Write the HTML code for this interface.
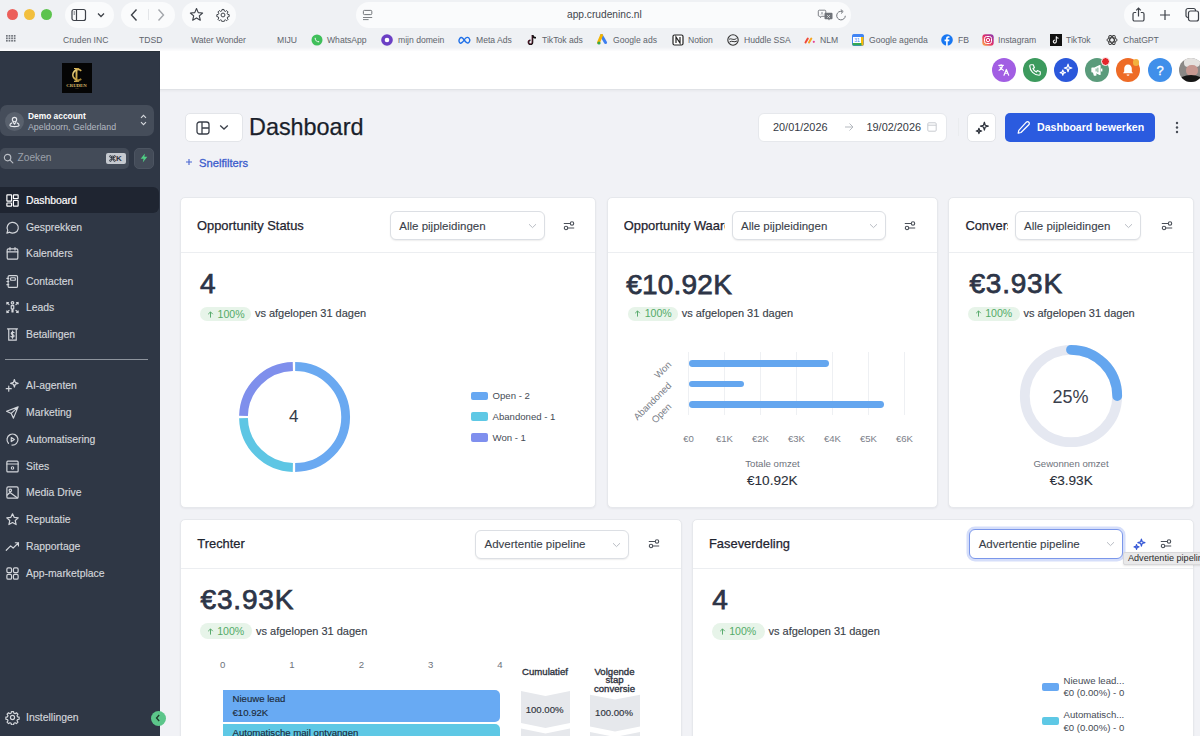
<!DOCTYPE html>
<html><head><meta charset="utf-8">
<style>
*{box-sizing:border-box;margin:0;padding:0}
html,body{width:1200px;height:736px;overflow:hidden}
body{position:relative;background:#eff1f4;font-family:"Liberation Sans",sans-serif;color:#1f2430}
.a{position:absolute}
.nw{white-space:nowrap}
svg{display:block}
/* chrome */
.pill{position:absolute;top:2px;height:26px;border-radius:13px;background:#fafbfc}
.tl{position:absolute;top:9px;width:11px;height:11px;border-radius:50%}
.bm{position:absolute;top:34px;font-size:8.6px;color:#60646c;white-space:nowrap;line-height:12px}
.bi{position:absolute;top:34px;width:12px;height:12px}
/* sidebar */
#side{position:absolute;left:0;top:51px;width:160px;height:685px;background:#2f3745;box-shadow:inset 0 1px 0 #283039}
.nav{position:absolute;margin-top:1px;left:26px;font-size:10.4px;color:#d3d6db;white-space:nowrap;line-height:12px;-webkit-text-stroke:0.15px #d3d6db}
.nico{position:absolute;left:4.5px;width:15px;height:15px}
/* header */
#hdr{position:absolute;left:160px;top:51px;width:1040px;height:39px;background:#fff;border-bottom:1px solid #e0e2e6;box-shadow:0 1px 2px rgba(0,0,0,.04)}
.hc{position:absolute;top:58px;width:24px;height:24px;border-radius:50%}
/* main */
#main{position:absolute;left:160px;top:90px;width:1040px;height:646px;background:#f1f2f6}
.card{position:absolute;background:#fff;border:1px solid #e5e7eb;border-radius:6px;overflow:hidden}
.ch{position:absolute;left:0;right:0;top:0;border-bottom:1px solid #eceef1}
.ttl{position:absolute;font-size:12.9px;color:#1f2430;white-space:nowrap;line-height:14px;-webkit-text-stroke:0.25px #1f2430}
.dd{position:absolute;height:30px;border:1px solid #dcdfe4;border-radius:6px;background:#fff;box-shadow:0 1px 1px rgba(0,0,0,.06)}
.ddt{position:absolute;left:9px;top:8px;font-size:11.4px;color:#3a3f4a;white-space:nowrap;line-height:13px}
.big{position:absolute;font-size:28px;font-weight:700;color:#2d3547;white-space:nowrap;line-height:28px}
.badge{position:absolute;height:14px;border-radius:7px;background:#e7f5e9;color:#55b066;font-size:10.8px;line-height:14px;white-space:nowrap}
.vs{position:absolute;font-size:11px;color:#3a3f4a;white-space:nowrap;line-height:13px;-webkit-text-stroke:0.15px #3a3f4a}
</style></head><body>

<!-- ===== Browser chrome ===== -->
<div class="tl" style="left:7px;background:#ec5f5a"></div>
<div class="tl" style="left:24px;background:#f2bf3d"></div>
<div class="tl" style="left:41px;background:#5cc34d"></div>

<div class="pill" style="left:65px;width:49px"></div>
<div class="pill" style="left:121px;width:54px"></div>
<div class="pill" style="left:182px;width:54px"></div>
<div class="pill" style="left:356px;width:495px"></div>
<div class="pill" style="left:1124px;width:90px"></div>

<div class="a nw" style="left:567px;top:8px;font-size:10.2px;color:#42464d;line-height:13px">app.crudeninc.nl</div>


<!-- toolbar icons -->
<svg class="a" style="left:71px;top:8px" width="16" height="14" viewBox="0 0 16 14"><rect x="1" y="1.5" width="13.5" height="11" rx="2" fill="none" stroke="#3d4148" stroke-width="1.2"/><line x1="5.5" y1="1.5" x2="5.5" y2="12.5" stroke="#3d4148" stroke-width="1.2"/><line x1="2.6" y1="4" x2="4" y2="4" stroke="#3d4148" stroke-width="0.9"/><line x1="2.6" y1="6" x2="4" y2="6" stroke="#3d4148" stroke-width="0.9"/></svg>
<svg class="a" style="left:97px;top:12px" width="8" height="6" viewBox="0 0 8 6"><path d="M1 1.5 L4 4.5 L7 1.5" fill="none" stroke="#3d4148" stroke-width="1.3"/></svg>
<svg class="a" style="left:130px;top:8px" width="8" height="14" viewBox="0 0 8 14"><path d="M6.5 1.5 L1.5 7 L6.5 12.5" fill="none" stroke="#3d4148" stroke-width="1.4"/></svg>
<div class="a" style="left:148px;top:9px;width:1px;height:11px;background:#e3e5e8"></div>
<svg class="a" style="left:157px;top:8px" width="8" height="14" viewBox="0 0 8 14"><path d="M1.5 1.5 L6.5 7 L1.5 12.5" fill="none" stroke="#a3a6ab" stroke-width="1.4"/></svg>
<svg class="a" style="left:189px;top:7px" width="15" height="15" viewBox="0 0 24 24"><path d="M12 2.5 L14.8 9 L21.8 9.6 L16.5 14.2 L18.1 21.2 L12 17.5 L5.9 21.2 L7.5 14.2 L2.2 9.6 L9.2 9 Z" fill="none" stroke="#3d4148" stroke-width="1.8" stroke-linejoin="round"/></svg>
<svg class="a" style="left:215.5px;top:7.5px" width="14" height="14" viewBox="0 0 24 24"><path d="M10.3 2.5h3.4l.5 2.6 1.9.8 2.2-1.5 2.4 2.4-1.5 2.2.8 1.9 2.6.5v3.4l-2.6.5-.8 1.9 1.5 2.2-2.4 2.4-2.2-1.5-1.9.8-.5 2.6h-3.4l-.5-2.6-1.9-.8-2.2 1.5-2.4-2.4 1.5-2.2-.8-1.9-2.6-.5v-3.4l2.6-.5.8-1.9-1.5-2.2 2.4-2.4 2.2 1.5 1.9-.8z" fill="none" stroke="#3d4148" stroke-width="1.7" stroke-linejoin="round"/><circle cx="12" cy="12" r="3.3" fill="none" stroke="#3d4148" stroke-width="1.7"/></svg>
<svg class="a" style="left:362px;top:9px" width="11" height="12" viewBox="0 0 11 12"><rect x="1.4" y="1.4" width="8.4" height="4.2" rx="1" fill="none" stroke="#707478" stroke-width="1"/><path d="M1 8.5 H10.2 M1 10.6 H6.6" stroke="#707478" stroke-width="0.9"/></svg>
<svg class="a" style="left:817px;top:9px" width="17" height="12" viewBox="0 0 17 12"><path d="M2.3 1.2 H7.8 A1 1 0 0 1 8.8 2.2 V6.3 A1 1 0 0 1 7.8 7.3 H4.5 L3.5 8.6 L3.2 7.3 H2.3 A1 1 0 0 1 1.3 6.3 V2.2 A1 1 0 0 1 2.3 1.2 Z" fill="none" stroke="#6f7379" stroke-width="0.9"/><path d="M4 5.8 L5 3 L6 5.8" fill="none" stroke="#8a8e94" stroke-width="0.6"/><path d="M8.5 3.8 H14.5 A1 1 0 0 1 15.5 4.8 V9.3 A1 1 0 0 1 14.5 10.3 H12.8 L12 11.6 L11.2 10.3 H8.5 A1 1 0 0 1 7.5 9.3 V4.8 A1 1 0 0 1 8.5 3.8 Z" fill="#6f7379"/><path d="M10 6 L13 9 M13 6 L10.2 8.8" stroke="#e8e9eb" stroke-width="0.7"/></svg>
<svg class="a" style="left:836px;top:9px" width="11" height="12" viewBox="0 0 11 12"><path d="M9.3 6.8 A4.3 4.3 0 1 1 6 2.4" fill="none" stroke="#6f7379" stroke-width="1"/><path d="M4.8 0.6 L7.2 2.5 L5 4.5" fill="none" stroke="#6f7379" stroke-width="1"/></svg>
<svg class="a" style="left:1132px;top:7px" width="13" height="15" viewBox="0 0 13 15"><path d="M4.2 5.5 H2.5 A1.5 1.5 0 0 0 1 7 V12.5 A1.5 1.5 0 0 0 2.5 14 H10.5 A1.5 1.5 0 0 0 12 12.5 V7 A1.5 1.5 0 0 0 10.5 5.5 H8.8" fill="none" stroke="#3d4148" stroke-width="1.2"/><path d="M6.5 9.5 V1.2 M4.2 3.3 L6.5 1 L8.8 3.3" fill="none" stroke="#3d4148" stroke-width="1.2"/></svg>
<svg class="a" style="left:1159px;top:9px" width="12" height="12" viewBox="0 0 12 12"><path d="M6 1 V11 M1 6 H11" stroke="#3d4148" stroke-width="1.2"/></svg>
<svg class="a" style="left:1185px;top:7px" width="15" height="15" viewBox="0 0 15 15"><rect x="1" y="1.5" width="9.5" height="9" rx="2" fill="none" stroke="#3d4148" stroke-width="1.2"/><rect x="3.5" y="4" width="10" height="10" rx="2" fill="#fafbfc" stroke="#3d4148" stroke-width="1.2"/></svg>

<!-- bookmarks -->
<svg class="a" style="left:5.8px;top:35px" width="10" height="7" viewBox="0 0 10 7"><g fill="#6f737a"><rect x="0.0" y="0.00" width="1.7" height="1.7"/><rect x="2.6" y="0.00" width="1.7" height="1.7"/><rect x="5.2" y="0.00" width="1.7" height="1.7"/><rect x="7.8" y="0.00" width="1.7" height="1.7"/><rect x="0.0" y="2.45" width="1.7" height="1.7"/><rect x="2.6" y="2.45" width="1.7" height="1.7"/><rect x="5.2" y="2.45" width="1.7" height="1.7"/><rect x="7.8" y="2.45" width="1.7" height="1.7"/><rect x="0.0" y="4.90" width="1.7" height="1.7"/><rect x="2.6" y="4.90" width="1.7" height="1.7"/><rect x="5.2" y="4.90" width="1.7" height="1.7"/><rect x="7.8" y="4.90" width="1.7" height="1.7"/></g></svg>
<div class="bm" style="left:63px">Cruden INC</div>
<div class="bm" style="left:139px">TDSD</div>
<div class="bm" style="left:191px">Water Wonder</div>
<div class="bm" style="left:277px">MIJU</div>
<svg class="bi" style="left:311px" viewBox="0 0 12 12"><circle cx="6" cy="6" r="5.5" fill="#3fbf5a"/><path d="M4 3.5 C3.5 4 3.6 5.5 5 7 C6.5 8.5 7.8 8.6 8.4 8 L7.6 7.1 L6.8 7.5 C6.2 7.2 4.8 5.8 4.5 5.2 L4.9 4.4 Z" fill="#fff"/></svg>
<div class="bm" style="left:327px">WhatsApp</div>
<svg class="bi" style="left:381px" viewBox="0 0 12 12"><circle cx="6" cy="6" r="5.8" fill="#6b3fc4"/><circle cx="6" cy="6" r="2.3" fill="#fff"/></svg>
<div class="bm" style="left:398px">mijn domein</div>
<svg class="bi" style="left:458px;top:36px;width:13px;height:8px" viewBox="0 0 13 8"><path d="M1.5 6.5 C0 4 2.5 0 4.5 2 C6 3.5 7 5.5 8.5 6.5 C10.5 8 12.5 5 11.5 3 C10.5 0.5 8 1 6.5 3.5 C5 6 2.5 8.5 1.5 6.5 Z" fill="none" stroke="#1e6fe8" stroke-width="1.4"/></svg>
<div class="bm" style="left:476px">Meta Ads</div>
<svg class="bi" style="left:526px" viewBox="0 0 12 12"><path d="M6.5 1 V8.2 A2 2 0 1 1 4.5 6.2" fill="none" stroke="#111" stroke-width="1.6"/><path d="M6.5 1.2 C7 3 8.5 3.8 10 3.8" fill="none" stroke="#111" stroke-width="1.6"/><path d="M6 1.5 V8 A2 2 0 1 1 4 6" fill="none" stroke="#e0245e" stroke-width="0.5" opacity="0.6"/></svg>
<div class="bm" style="left:542px">TikTok ads</div>
<svg class="bi" style="left:597px" viewBox="0 0 12 12"><path d="M4.5 1.5 L8.5 8.5" stroke="#3d7ef0" stroke-width="3" stroke-linecap="round"/><path d="M4.5 1.5 L1.5 8.5" stroke="#f4b400" stroke-width="3" stroke-linecap="round"/><circle cx="2" cy="9" r="1.6" fill="#34a853"/><path d="M7.5 1.5 L10.5 8.5" stroke="#4285f4" stroke-width="0" /></svg>
<div class="bm" style="left:613px">Google ads</div>
<svg class="bi" style="left:672px" viewBox="0 0 12 12"><rect x="1" y="1" width="10" height="10" rx="1.5" fill="#fff" stroke="#222" stroke-width="1.2"/><path d="M4 9 V3 L8 9 V3" fill="none" stroke="#222" stroke-width="1.2"/></svg>
<div class="bm" style="left:688px">Notion</div>
<svg class="bi" style="left:727px" viewBox="0 0 12 12"><circle cx="6" cy="6" r="5.2" fill="none" stroke="#333" stroke-width="1.1"/><path d="M2 5.5 C4 3.5 6 7 9.5 4.5 M2.5 8 C5 6 7 9 10 7" fill="none" stroke="#333" stroke-width="1"/></svg>
<div class="bm" style="left:744px">Huddle SSA</div>
<svg class="bi" style="left:804px" viewBox="0 0 12 12"><path d="M1.5 8.5 L3.8 4.5" stroke="#f04b3a" stroke-width="2" stroke-linecap="round"/><path d="M5 8.5 L7.3 4.5" stroke="#f5a623" stroke-width="2" stroke-linecap="round"/><circle cx="9.8" cy="7.8" r="1.1" fill="#e84393"/></svg>
<div class="bm" style="left:820px">NLM</div>
<svg class="bi" style="left:852px" viewBox="0 0 12 12"><rect x="0.5" y="0.5" width="11" height="11" rx="1.5" fill="#fff" stroke="#4285f4" stroke-width="1"/><rect x="0.5" y="0.5" width="11" height="2.5" fill="#4285f4"/><rect x="9" y="3" width="2.5" height="8.5" fill="#fbbc04"/><rect x="0.5" y="9" width="9" height="2.5" fill="#34a853"/><text x="5" y="8.3" font-size="5" font-family="Liberation Sans" fill="#4285f4" text-anchor="middle">31</text></svg>
<div class="bm" style="left:869px">Google agenda</div>
<svg class="bi" style="left:941px" viewBox="0 0 12 12"><circle cx="6" cy="6" r="5.8" fill="#1877f2"/><path d="M6.7 12 V7.2 H8.2 L8.4 5.6 H6.7 V4.6 C6.7 4.1 6.9 3.8 7.5 3.8 H8.5 V2.4 C8.1 2.3 7.6 2.3 7.1 2.3 C5.9 2.3 5.1 3 5.1 4.4 V5.6 H3.6 V7.2 H5.1 V12 Z" fill="#fff"/></svg>
<div class="bm" style="left:958px">FB</div>
<svg class="bi" style="left:982px" viewBox="0 0 12 12"><defs><linearGradient id="ig" x1="0" y1="1" x2="1" y2="0"><stop offset="0" stop-color="#fdb347"/><stop offset=".5" stop-color="#e1306c"/><stop offset="1" stop-color="#833ab4"/></linearGradient></defs><rect x="0.3" y="0.3" width="11.4" height="11.4" rx="3" fill="url(#ig)"/><rect x="2.5" y="2.5" width="7" height="7" rx="2" fill="none" stroke="#fff" stroke-width="1"/><circle cx="6" cy="6" r="1.7" fill="none" stroke="#fff" stroke-width="1"/></svg>
<div class="bm" style="left:998px">Instagram</div>
<svg class="bi" style="left:1050px" viewBox="0 0 12 12"><rect x="0" y="0" width="12" height="12" fill="#111"/><path d="M6.3 2.5 V7.6 A1.5 1.5 0 1 1 4.8 6.1" fill="none" stroke="#fff" stroke-width="1.1"/><path d="M6.3 2.6 C6.7 3.6 7.6 4.2 8.6 4.2" fill="none" stroke="#fff" stroke-width="1.1"/></svg>
<div class="bm" style="left:1066px">TikTok</div>
<svg class="bi" style="left:1106px" viewBox="0 0 12 12"><g fill="none" stroke="#333" stroke-width="0.9"><ellipse cx="6" cy="6" rx="5" ry="2.2"/><ellipse cx="6" cy="6" rx="5" ry="2.2" transform="rotate(60 6 6)"/><ellipse cx="6" cy="6" rx="5" ry="2.2" transform="rotate(120 6 6)"/></g></svg>
<div class="bm" style="left:1123px">ChatGPT</div>


<!-- ===== Sidebar ===== -->
<div class="a" style="left:0;top:47px;width:1200px;height:4px;background:linear-gradient(rgba(255,255,255,0),rgba(255,255,255,.85))"></div>
<div id="side">
<div class="a" style="left:62px;top:12px;width:30px;height:30px;background:#050505">
 <svg class="a" style="left:0;top:0" width="30" height="30" viewBox="0 0 30 30"><defs><linearGradient id="gold" x1="0" y1="0" x2="1" y2="1"><stop offset="0" stop-color="#f0d98a"/><stop offset=".6" stop-color="#c9a445"/><stop offset="1" stop-color="#9a7a2c"/></linearGradient></defs>
 <path d="M19.3 7.8 A5.2 5.2 0 1 0 19.3 16" fill="none" stroke="url(#gold)" stroke-width="1.7"/>
 <rect x="13.6" y="5.2" width="1.9" height="13.4" fill="url(#gold)"/><rect x="12" y="5" width="5.2" height="1.1" fill="url(#gold)"/><rect x="12" y="17.8" width="5.2" height="1.1" fill="url(#gold)"/>
 <text x="4.2" y="23.9" textLength="20.6" lengthAdjust="spacingAndGlyphs" font-family="Liberation Serif" font-size="4.6" font-weight="700" fill="#d8bd6a">CRUDEN</text>
 <text x="15" y="26.3" font-family="Liberation Serif" font-size="2" fill="#b89a50" text-anchor="middle">INC</text></svg>
</div>
<div class="a" style="left:0;top:54px;width:154px;height:31px;border-radius:7px;background:#454d5a"></div>
<div class="a" style="left:4.5px;top:60.5px;width:19px;height:19px;border-radius:50%;background:#59616d"></div>
<svg class="a" style="left:7.5px;top:63.5px" width="13" height="13" viewBox="0 0 24 24" fill="none" stroke="#e8eaee" stroke-width="2.1" stroke-linejoin="round"><circle cx="12" cy="8.5" r="4"/><path d="M7.5 14.5 C4.5 15.5 3.5 17.5 3.5 19 C3.5 20.5 7 21.5 12 21.5 C17 21.5 20.5 20.5 20.5 19 C20.5 17.5 19.5 15.5 16.5 14.5"/><path d="M8.5 12 L12 17 L15.5 12"/></svg>
<div class="a nw" style="left:28px;top:59.5px;font-size:8.4px;font-weight:700;color:#fff;line-height:10px">Demo account</div>
<div class="a nw" style="left:28px;top:71px;font-size:8.8px;color:#b4b9c1;line-height:10px">Apeldoorn, Gelderland</div>
<svg class="a" style="left:140px;top:63px" width="7" height="12" viewBox="0 0 7 12"><path d="M1 3.8 L3.5 1.3 L6 3.8 M1 8.2 L3.5 10.7 L6 8.2" fill="none" stroke="#d6d9de" stroke-width="1.1"/></svg>
<div class="a" style="left:0;top:96.5px;width:129px;height:21px;border-radius:5px;background:#434b58"></div>
<svg class="a" style="left:3px;top:101.5px" width="11" height="11" viewBox="0 0 24 24" fill="none" stroke="#b9bdc4" stroke-width="2.6" stroke-linecap="round"><circle cx="10" cy="10" r="7"/><path d="M15.5 15.5 L21.5 21.5"/></svg>
<div class="a nw" style="left:17.5px;top:101px;font-size:10.2px;color:#9ba1aa;line-height:12px">Zoeken</div>
<div class="a" style="left:106px;top:101.5px;width:19.5px;height:11.5px;border-radius:2px;background:#c5c9cf"></div>
<svg class="a" style="left:108.5px;top:104px" width="7" height="7" viewBox="0 0 24 24" fill="none" stroke="#2b313c" stroke-width="3"><path d="M8 8 V16 M16 8 V16 M8 8 H16 M8 16 H16 M8 8 A4 4 0 1 1 8 8.01 M8 8 H5 A3 3 0 1 1 8 5 Z M16 8 V5 A3 3 0 1 1 19 8 Z M16 16 H19 A3 3 0 1 1 16 19 Z M8 16 V19 A3 3 0 1 1 5 16 Z"/></svg><div class="a nw" style="left:116px;top:102.5px;font-size:8px;font-weight:700;color:#2b313c;line-height:10px">K</div>
<div class="a" style="left:133.5px;top:96.5px;width:20.5px;height:21px;border-radius:5px;background:#434b58;border:1px solid #4c5461"></div>
<svg class="a" style="left:139px;top:102px" width="10" height="10" viewBox="0 0 24 24"><path d="M14 1 L4 14 H11 L9 23 L20 9 H13 Z" fill="#4fcf84"/></svg>
<div class="a" style="left:0;top:135.5px;width:159px;height:26.5px;border-radius:0 6px 6px 0;background:#1f2531"></div>
<svg class="nico" style="top:141.5px" viewBox="0 0 24 24" fill="none" stroke="#ffffff" stroke-width="1.9" stroke-linecap="round" stroke-linejoin="round"><rect x="3" y="3" width="7.5" height="10" rx="0.6"/><rect x="13.5" y="3" width="7.5" height="6" rx="0.6"/><rect x="3" y="16" width="7.5" height="5" rx="0.6"/><rect x="13.5" y="12" width="7.5" height="9" rx="0.6"/></svg><div class="nav" style="top:142.5px;color:#ffffff;-webkit-text-stroke:0.2px #fff;">Dashboard</div>
<svg class="nico" style="top:168.5px" viewBox="0 0 24 24" fill="none" stroke="#d3d6db" stroke-width="1.9" stroke-linecap="round" stroke-linejoin="round"><path d="M7.5 19.5 A9 8.5 0 1 0 4.5 16.5 L3 21 Z"/></svg><div class="nav" style="top:169.5px;color:#d3d6db;">Gesprekken</div>
<svg class="nico" style="top:195.4px" viewBox="0 0 24 24" fill="none" stroke="#d3d6db" stroke-width="1.9" stroke-linecap="round" stroke-linejoin="round"><rect x="3.5" y="4.5" width="17" height="16.5" rx="2"/><path d="M3.5 9.5 H20.5 M8 2.5 V6.5 M16 2.5 V6.5"/></svg><div class="nav" style="top:196.4px;color:#d3d6db;">Kalenders</div>
<svg class="nico" style="top:222.5px" viewBox="0 0 24 24" fill="none" stroke="#d3d6db" stroke-width="1.9" stroke-linecap="round" stroke-linejoin="round"><rect x="5" y="2.5" width="15" height="19" rx="2"/><rect x="9" y="6" width="7.5" height="4" rx="1"/><path d="M3 7 H6 M3 12 H6 M3 17 H6"/></svg><div class="nav" style="top:223.5px;color:#d3d6db;">Contacten</div>
<svg class="nico" style="top:249px" viewBox="0 0 24 24" fill="none" stroke="#d3d6db" stroke-width="1.9" stroke-linecap="round" stroke-linejoin="round"><circle cx="12" cy="4.5" r="2"/><path d="M10 9 H14 V14 H12.8 V19 H11.2 V14 H10 Z"/><path d="M3 4 L6.5 7.5 M3 4 H5.5 M3 4 V6.5 M21 4 L17.5 7.5 M21 4 H18.5 M21 4 V6.5 M3 20 L6.5 16.5 M3 20 H5.5 M3 20 V17.5 M21 20 L17.5 16.5 M21 20 H18.5 M21 20 V17.5"/></svg><div class="nav" style="top:250px;color:#d3d6db;">Leads</div>
<svg class="nico" style="top:275.6px" viewBox="0 0 24 24" fill="none" stroke="#d3d6db" stroke-width="1.9" stroke-linecap="round" stroke-linejoin="round"><path d="M4 3 H20 M6 3 V21 H18 V3"/><path d="M14.5 9 C13.5 8 10 8 10 10.3 C10 12.5 14.5 11.8 14.5 14.2 C14.5 16.3 11 16.3 9.5 15.2 M12 6.5 V18"/></svg><div class="nav" style="top:276.6px;color:#d3d6db;">Betalingen</div>
<svg class="nico" style="top:327px" viewBox="0 0 24 24" fill="none" stroke="#d3d6db" stroke-width="1.9" stroke-linecap="round" stroke-linejoin="round"><path d="M15 2.5 L16.5 7 L21 8.5 L16.5 10 L15 14.5 L13.5 10 L9 8.5 L13.5 7 Z"/><path d="M6 13 V21 M2 17 H10"/></svg><div class="nav" style="top:328px;color:#d3d6db;">AI-agenten</div>
<svg class="nico" style="top:354px" viewBox="0 0 24 24" fill="none" stroke="#d3d6db" stroke-width="1.9" stroke-linecap="round" stroke-linejoin="round"><path d="M21 3 L2.5 10 L10 13.5 L13.5 21 Z M10 13.5 L21 3"/></svg><div class="nav" style="top:355px;color:#d3d6db;">Marketing</div>
<svg class="nico" style="top:380.6px" viewBox="0 0 24 24" fill="none" stroke="#d3d6db" stroke-width="1.9" stroke-linecap="round" stroke-linejoin="round"><path d="M5.5 18 A8.8 8.8 0 1 1 11 20.8"/><path d="M10 8.8 L15 12 L10 15.2 Z"/></svg><div class="nav" style="top:381.6px;color:#d3d6db;">Automatisering</div>
<svg class="nico" style="top:407.6px" viewBox="0 0 24 24" fill="none" stroke="#d3d6db" stroke-width="1.9" stroke-linecap="round" stroke-linejoin="round"><rect x="3" y="3.5" width="18" height="17" rx="1.5"/><path d="M3 8 H21"/><circle cx="12" cy="14.5" r="2.8" fill="#d3d6db" stroke="none"/><path d="M12 13.3 V15.7" stroke="#2f3745" stroke-width="1.2"/></svg><div class="nav" style="top:408.6px;color:#d3d6db;">Sites</div>
<svg class="nico" style="top:434px" viewBox="0 0 24 24" fill="none" stroke="#d3d6db" stroke-width="1.9" stroke-linecap="round" stroke-linejoin="round"><rect x="3" y="3" width="18" height="18" rx="2"/><circle cx="8.5" cy="8.5" r="2"/><path d="M3.5 16 L8 12 L19.5 20.5"/></svg><div class="nav" style="top:435px;color:#d3d6db;">Media Drive</div>
<svg class="nico" style="top:461px" viewBox="0 0 24 24" fill="none" stroke="#d3d6db" stroke-width="1.9" stroke-linecap="round" stroke-linejoin="round"><path d="M12 2.8 L14.8 8.7 L21.2 9.4 L16.4 13.7 L17.8 20.1 L12 16.9 L6.2 20.1 L7.6 13.7 L2.8 9.4 L9.2 8.7 Z"/></svg><div class="nav" style="top:462px;color:#d3d6db;">Reputatie</div>
<svg class="nico" style="top:487.79999999999995px" viewBox="0 0 24 24" fill="none" stroke="#d3d6db" stroke-width="1.9" stroke-linecap="round" stroke-linejoin="round"><path d="M2 18 L9 11 L13 14.5 L21.5 6 M16.5 6 H21.5 V11"/></svg><div class="nav" style="top:488.79999999999995px;color:#d3d6db;">Rapportage</div>
<svg class="nico" style="top:514.8px" viewBox="0 0 24 24" fill="none" stroke="#d3d6db" stroke-width="1.9" stroke-linecap="round" stroke-linejoin="round"><rect x="3" y="3" width="7.5" height="7.5" rx="2"/><rect x="13.5" y="3" width="7.5" height="7.5" rx="2"/><rect x="3" y="13.5" width="7.5" height="7.5" rx="2"/><rect x="13.5" y="13.5" width="7.5" height="7.5" rx="2"/></svg><div class="nav" style="top:515.8px;color:#d3d6db;">App-marketplace</div>
<svg class="nico" style="top:659px" viewBox="0 0 24 24" fill="none" stroke="#d3d6db" stroke-width="1.9" stroke-linecap="round" stroke-linejoin="round"><path d="M10.3 2.5h3.4l.5 2.6 1.9.8 2.2-1.5 2.4 2.4-1.5 2.2.8 1.9 2.6.5v3.4l-2.6.5-.8 1.9 1.5 2.2-2.4 2.4-2.2-1.5-1.9.8-.5 2.6h-3.4l-.5-2.6-1.9-.8-2.2 1.5-2.4-2.4 1.5-2.2-.8-1.9-2.6-.5v-3.4l2.6-.5.8-1.9-1.5-2.2 2.4-2.4 2.2 1.5 1.9-.8z"/><circle cx="12" cy="12" r="3.3"/></svg><div class="nav" style="top:660px;color:#d3d6db;">Instellingen</div>
<div class="a" style="left:5px;top:307.5px;width:143px;height:1px;background:#8e949d"></div>
</div>



<!-- ===== Header ===== -->
<div id="hdr"></div>
<div class="hc" style="left:991.5px;background:#a25ee3"></div>
<svg class="a" style="left:997px;top:63px" width="14" height="14" viewBox="0 0 24 24" fill="none" stroke="#fff" stroke-width="2" stroke-linecap="round" stroke-linejoin="round"><path d="M3 4 H11 M7 2.5 V4 M9.5 4 C9 8 6.5 11 3.5 12.5 M5 7 C6.5 10 8.5 11.5 11 12.5"/><path d="M12 21 L16 11 L20 21 M13.5 17.5 H18.5"/></svg>
<div class="hc" style="left:1022.5px;background:#3c9a5d"></div>
<svg class="a" style="left:1028px;top:63px" width="14" height="14" viewBox="0 0 24 24" fill="none" stroke="#fff" stroke-width="2" stroke-linejoin="round"><path d="M5 3 H9 L11 8 L8.5 9.5 C9.5 12 12 14.5 14.5 15.5 L16 13 L21 15 V19 C21 20 20 21 19 21 C10 20.5 3.5 14 3 5 C3 4 4 3 5 3 Z"/></svg>
<div class="hc" style="left:1054px;background:#2b58db"></div>
<svg class="a" style="left:1059px;top:63px" width="14" height="14" viewBox="0 0 24 24" fill="none" stroke="#fff" stroke-width="2" stroke-linejoin="round"><path d="M15.5 2 L17 7 L22 8.5 L17 10 L15.5 15 L14 10 L9 8.5 L14 7 Z"/><path d="M6.5 12 L7.6 15.4 L11 16.5 L7.6 17.6 L6.5 21 L5.4 17.6 L2 16.5 L5.4 15.4 Z"/></svg>
<div class="hc" style="left:1085px;background:#5a9b7b"></div>
<svg class="a" style="left:1090px;top:63px" width="14" height="14" viewBox="0 0 24 24" fill="none" stroke="#fff" stroke-width="2.4" stroke-linejoin="round"><path d="M3.5 9 H8 L17 4.5 V19.5 L8 15 H3.5 Z" fill="#fff"/><path d="M6 15 L7.5 20.5 H10 L9 15" fill="#fff"/><path d="M20 9.5 V14.5"/><path d="M10.5 9.5 V14.5 M13.5 8 V16" stroke="#5a9b7b" stroke-width="1.5"/></svg>
<div class="a" style="left:1101px;top:57px;width:9px;height:9px;border-radius:50%;background:#e3262b;border:1px solid #fff"></div>
<div class="hc" style="left:1116px;background:#ee6b26"></div>
<svg class="a" style="left:1121px;top:63px" width="14" height="14" viewBox="0 0 24 24" fill="#fff"><path d="M12 2.5 C8 2.5 5.5 5.5 5.5 9.5 V14.5 L3.5 17.5 H20.5 L18.5 14.5 V9.5 C18.5 5.5 16 2.5 12 2.5 Z"/><path d="M9.5 19.5 A2.5 2.5 0 0 0 14.5 19.5 Z"/></svg>
<div class="a" style="left:1132.8px;top:59.3px;width:6.5px;height:6.5px;border-radius:50%;background:#f2b13e"></div>
<div class="hc" style="left:1148px;background:#3f8fea"></div>
<div class="a nw" style="left:1148px;top:62.5px;width:24px;text-align:center;font-size:13px;color:#fff;line-height:15px;-webkit-text-stroke:0.3px #fff">?</div>
<div class="hc" style="left:1179px;background:#8a8886;overflow:hidden"><div class="a" style="left:5px;top:0px;width:16px;height:9px;background:#e4e2e0;border-radius:4px"></div><div class="a" style="left:7px;top:7px;width:12px;height:11px;border-radius:45%;background:#c69891"></div><div class="a" style="left:0px;top:17px;width:24px;height:12px;border-radius:50% 50% 0 0;background:#151515"></div></div>

<!-- ===== Main ===== -->
<div id="main"></div>
<div class="a" style="left:160px;top:90px;width:1040px;height:3px;background:linear-gradient(rgba(0,0,0,.035),rgba(0,0,0,0))"></div>
<div class="a" style="left:184.5px;top:112.5px;width:58px;height:29px;background:#fff;border:1px solid #e3e5e9;border-radius:5px"></div>
<svg class="a" style="left:196px;top:120.5px" width="14" height="14" viewBox="0 0 14 14" fill="none" stroke="#3a3f49" stroke-width="1.3"><rect x="1" y="1" width="12" height="12" rx="2.5"/><path d="M6 1 V13 M6 7 H13"/></svg>
<svg class="a" style="left:219px;top:124px" width="10" height="7" viewBox="0 0 10 7"><path d="M1.2 1.5 L5 5 L8.8 1.5" fill="none" stroke="#3a3f49" stroke-width="1.3"/></svg>
<div class="a nw" style="left:249px;top:113px;font-size:23.4px;color:#1a1f2b;line-height:28px;-webkit-text-stroke:0.25px #1a1f2b">Dashboard</div>
<svg class="a" style="left:184.5px;top:158px" width="8" height="8" viewBox="0 0 8 8"><path d="M4 1 V7 M1 4 H7" stroke="#4a66d1" stroke-width="1.1"/></svg>
<div class="a nw" style="left:199px;top:155.5px;font-size:11.2px;color:#3b5ccc;line-height:14px;-webkit-text-stroke:0.3px #3b5ccc">Snelfilters</div>

<div class="a" style="left:758px;top:113px;width:189px;height:28.5px;background:#fff;border:1px solid #e6e8ec;border-radius:6px"></div>
<div class="a nw" style="left:773px;top:121px;font-size:10.9px;color:#353a44;line-height:13px">20/01/2026</div>
<svg class="a" style="left:844px;top:122px" width="10" height="10" viewBox="0 0 10 10"><path d="M1 5 H9 M5.5 1.5 L9 5 L5.5 8.5" fill="none" stroke="#b5b9bf" stroke-width="1"/></svg>
<div class="a nw" style="left:866.5px;top:121px;font-size:10.9px;color:#353a44;line-height:13px">19/02/2026</div>
<svg class="a" style="left:926.5px;top:122px" width="10" height="10" viewBox="0 0 10 10"><rect x="0.8" y="0.8" width="8.4" height="8.4" rx="1" fill="none" stroke="#c8cbd0" stroke-width="1"/><path d="M0.8 3.2 H9.2" stroke="#c8cbd0" stroke-width="1"/></svg>
<div class="a" style="left:958px;top:118px;width:1px;height:18px;background:#eaecef"></div>
<div class="a" style="left:967px;top:112.5px;width:29px;height:29px;background:#fff;border:1px solid #e3e5e9;border-radius:5px"></div>
<svg class="a" style="left:974.5px;top:120.8px" width="14.5" height="14.5" viewBox="0 0 24 24" fill="none" stroke="#2d323c" stroke-width="2" stroke-linejoin="round"><path d="M15.5 2 L17 7 L22 8.5 L17 10 L15.5 15 L14 10 L9 8.5 L14 7 Z"/><path d="M6.5 12 L7.6 15.4 L11 16.5 L7.6 17.6 L6.5 21 L5.4 17.6 L2 16.5 L5.4 15.4 Z"/></svg>
<div class="a" style="left:1005px;top:112.5px;width:149.5px;height:29.5px;background:#2b5bdf;border-radius:5px"></div>
<svg class="a" style="left:1016px;top:120px" width="15" height="15" viewBox="0 0 24 24" fill="none" stroke="#fff" stroke-width="2" stroke-linejoin="round"><path d="M16.5 3.5 A2.5 2.5 0 0 1 20.5 7.5 L8 20 L3.5 21 L4.5 16.5 Z"/></svg>
<div class="a nw" style="left:1037px;top:121px;font-size:10.6px;font-weight:700;color:#fff;line-height:13px">Dashboard bewerken</div>
<svg class="a" style="left:1175px;top:121px" width="4" height="13" viewBox="0 0 4 13" fill="#474c55"><circle cx="2" cy="2" r="1.2"/><circle cx="2" cy="6.5" r="1.2"/><circle cx="2" cy="11" r="1.2"/></svg>

<!--CARDS-->
<div class="a" style="left:180.00px;top:197.00px;width:416.00px;height:311.00px;background:#fff;border:1px solid #e6e8ec;border-radius:5px;box-shadow:0 1px 2px rgba(16,24,40,.05);"></div>
<div class="a" style="left:181.00px;top:252.00px;width:414.00px;height:1.00px;background:#eceef1"></div>
<div class="a nw" style="left:197.00px;top:217.03px;font-size:12.9px;line-height:17px;color:#1f2430;font-weight:400;-webkit-text-stroke:0.25px #1f2430;">Opportunity Status</div>
<div class="a" style="left:390.00px;top:210.50px;width:155.00px;height:29.50px;background:#fff;border:1px solid #dcdfe4;border-radius:6px;box-shadow:0 1px 1.5px rgba(0,0,0,.07);"></div>
<div class="a nw" style="left:399.30px;top:218.67px;font-size:11.5px;line-height:15px;color:#3a3f4a;font-weight:400;-webkit-text-stroke:0.1px #3a3f4a;">Alle pijpleidingen</div>
<svg class="a" style="left:527.5px;top:222.75px" width="9" height="6" viewBox="0 0 9 6"><path d="M1 1.2 L4.5 4.6 L8 1.2" fill="none" stroke="#b9bdc4" stroke-width="1"/></svg>
<svg class="a" style="left:562.5px;top:220.5px" width="12" height="10" viewBox="0 0 12 10" fill="none" stroke="#4a4f58" stroke-width="1.1"><path d="M0.8 2.5 H7.2 M4.8 7 H11.2"/><circle cx="9" cy="2.5" r="1.7" fill="#fff"/><circle cx="3" cy="7" r="1.7" fill="#fff"/></svg>
<div class="a nw" style="left:200.00px;top:266.30px;font-size:28px;line-height:36px;color:#2d3547;font-weight:400;-webkit-text-stroke:0.75px #2d3547;">4</div>
<div class="a" style="left:200.30px;top:307.00px;width:50.70px;height:14.00px;background:#e7f4e9;border-radius:7.0px"></div>
<svg class="a" style="left:206.8px;top:310.5px" width="7" height="7" viewBox="0 0 7 7" fill="none" stroke="#5aab6e" stroke-width="1"><path d="M3.5 6.6 V1 M1.2 3.2 L3.5 0.9 L5.8 3.2"/></svg>
<div class="a nw" style="left:217.50px;top:306.63px;font-size:10.6px;line-height:14px;color:#54ab68;font-weight:400;">100%</div>
<div class="a nw" style="left:254.90px;top:305.69px;font-size:11px;line-height:14px;color:#3a3f4a;font-weight:400;-webkit-text-stroke:0.15px #3a3f4a;">vs afgelopen 31 dagen</div>
<svg class="a" style="left:233.7px;top:356.8px" width="120" height="120" viewBox="-60 -60 120 120">
<g fill="none" stroke-width="8.8">
<path d="M 1.15 -50.5 A 50.5 50.5 0 0 1 1.15 50.5" stroke="#6aa9f1"/>
<path d="M -1.15 50.5 A 50.5 50.5 0 0 1 -50.5 1.15" stroke="#5ec6e4"/>
<path d="M -50.5 -1.15 A 50.5 50.5 0 0 1 -1.15 -50.5" stroke="#7f8fec"/>
</g></svg>
<div class="a nw" style="left:143.70px;width:300px;text-align:center;top:406.41px;font-size:17px;line-height:22px;color:#333b48;font-weight:400;">4</div>
<div class="a" style="left:471.00px;top:391.50px;width:17.00px;height:8.50px;background:#67a8f2;border-radius:2px"></div>
<div class="a nw" style="left:492.50px;top:390.17px;font-size:9.6px;line-height:12px;color:#454b55;font-weight:400;">Open - 2</div>
<div class="a" style="left:471.00px;top:412.30px;width:17.00px;height:8.50px;background:#5ec8e5;border-radius:2px"></div>
<div class="a nw" style="left:492.50px;top:410.97px;font-size:9.6px;line-height:12px;color:#454b55;font-weight:400;">Abandoned - 1</div>
<div class="a" style="left:471.00px;top:433.10px;width:17.00px;height:8.50px;background:#7f8fee;border-radius:2px"></div>
<div class="a nw" style="left:492.50px;top:431.77px;font-size:9.6px;line-height:12px;color:#454b55;font-weight:400;">Won - 1</div>
<div class="a" style="left:607.00px;top:197.00px;width:331.00px;height:311.00px;background:#fff;border:1px solid #e6e8ec;border-radius:5px;box-shadow:0 1px 2px rgba(16,24,40,.05);"></div>
<div class="a" style="left:608.00px;top:252.00px;width:329.00px;height:1.00px;background:#eceef1"></div>
<div class="a" style="left:623.7px;top:219px;width:101.5px;height:16px;overflow:hidden"><div class="a nw" style="left:0.00px;top:-1.97px;font-size:12.9px;line-height:17px;color:#1f2430;font-weight:400;-webkit-text-stroke:0.25px #1f2430;">Opportunity Waarde</div>
</div>
<div class="a" style="left:731.70px;top:210.80px;width:154.30px;height:29.20px;background:#fff;border:1px solid #dcdfe4;border-radius:6px;box-shadow:0 1px 1.5px rgba(0,0,0,.07);"></div>
<div class="a nw" style="left:741.00px;top:218.82px;font-size:11.5px;line-height:15px;color:#3a3f4a;font-weight:400;-webkit-text-stroke:0.1px #3a3f4a;">Alle pijpleidingen</div>
<svg class="a" style="left:868.5px;top:222.9px" width="9" height="6" viewBox="0 0 9 6"><path d="M1 1.2 L4.5 4.6 L8 1.2" fill="none" stroke="#b9bdc4" stroke-width="1"/></svg>
<svg class="a" style="left:904.1px;top:220.5px" width="12" height="10" viewBox="0 0 12 10" fill="none" stroke="#4a4f58" stroke-width="1.1"><path d="M0.8 2.5 H7.2 M4.8 7 H11.2"/><circle cx="9" cy="2.5" r="1.7" fill="#fff"/><circle cx="3" cy="7" r="1.7" fill="#fff"/></svg>
<div class="a nw" style="left:626.30px;top:266.50px;font-size:28px;line-height:36px;color:#2d3547;font-weight:400;-webkit-text-stroke:0.75px #2d3547;letter-spacing:0.2px">€10.92K</div>
<div class="a" style="left:627.50px;top:307.00px;width:50.00px;height:13.50px;background:#e7f4e9;border-radius:6.75px"></div>
<svg class="a" style="left:634.0px;top:310.3px" width="7" height="7" viewBox="0 0 7 7" fill="none" stroke="#5aab6e" stroke-width="1"><path d="M3.5 6.6 V1 M1.2 3.2 L3.5 0.9 L5.8 3.2"/></svg>
<div class="a nw" style="left:644.70px;top:306.43px;font-size:10.6px;line-height:14px;color:#54ab68;font-weight:400;">100%</div>
<div class="a nw" style="left:681.70px;top:305.69px;font-size:11px;line-height:14px;color:#3a3f4a;font-weight:400;-webkit-text-stroke:0.15px #3a3f4a;">vs afgelopen 31 dagen</div>
<div class="a" style="left:688.00px;top:351.50px;width:1.00px;height:63.50px;background:#eef0f3"></div>
<div class="a" style="left:724.00px;top:351.50px;width:1.00px;height:63.50px;background:#eef0f3"></div>
<div class="a" style="left:760.00px;top:351.50px;width:1.00px;height:63.50px;background:#eef0f3"></div>
<div class="a" style="left:796.00px;top:351.50px;width:1.00px;height:63.50px;background:#eef0f3"></div>
<div class="a" style="left:832.00px;top:351.50px;width:1.00px;height:63.50px;background:#eef0f3"></div>
<div class="a" style="left:868.00px;top:351.50px;width:1.00px;height:63.50px;background:#eef0f3"></div>
<div class="a" style="left:904.00px;top:351.50px;width:1.00px;height:63.50px;background:#eef0f3"></div>
<div class="a" style="left:688.50px;top:360.00px;width:140.80px;height:6.70px;background:#64a6ef;border-radius:3.4px"></div>
<div class="a" style="left:688.50px;top:380.60px;width:55.00px;height:6.70px;background:#64a6ef;border-radius:3.4px"></div>
<div class="a" style="left:688.50px;top:401.00px;width:195.10px;height:6.70px;background:#64a6ef;border-radius:3.4px"></div>
<div class="a nw" style="left:538.50px;width:300px;text-align:center;top:433.11px;font-size:9.6px;line-height:12px;color:#7b8089;font-weight:400;">€0</div>
<div class="a nw" style="left:574.50px;width:300px;text-align:center;top:433.11px;font-size:9.6px;line-height:12px;color:#7b8089;font-weight:400;">€1K</div>
<div class="a nw" style="left:610.50px;width:300px;text-align:center;top:433.11px;font-size:9.6px;line-height:12px;color:#7b8089;font-weight:400;">€2K</div>
<div class="a nw" style="left:646.50px;width:300px;text-align:center;top:433.11px;font-size:9.6px;line-height:12px;color:#7b8089;font-weight:400;">€3K</div>
<div class="a nw" style="left:682.50px;width:300px;text-align:center;top:433.11px;font-size:9.6px;line-height:12px;color:#7b8089;font-weight:400;">€4K</div>
<div class="a nw" style="left:718.50px;width:300px;text-align:center;top:433.11px;font-size:9.6px;line-height:12px;color:#7b8089;font-weight:400;">€5K</div>
<div class="a nw" style="left:754.50px;width:300px;text-align:center;top:433.11px;font-size:9.6px;line-height:12px;color:#7b8089;font-weight:400;">€6K</div>
<div class="a nw" style="left:469.5px;top:357px;width:200px;text-align:right;font-size:9.6px;line-height:12px;color:#7b8089;transform-origin:100% 50%;transform:rotate(-45deg)">Won</div>
<div class="a nw" style="left:469.5px;top:378px;width:200px;text-align:right;font-size:9.6px;line-height:12px;color:#7b8089;transform-origin:100% 50%;transform:rotate(-45deg)">Abandoned</div>
<div class="a nw" style="left:469.5px;top:398.5px;width:200px;text-align:right;font-size:9.6px;line-height:12px;color:#7b8089;transform-origin:100% 50%;transform:rotate(-45deg)">Open</div>
<div class="a nw" style="left:622.50px;width:300px;text-align:center;top:457.61px;font-size:9.6px;line-height:12px;color:#6d727b;font-weight:400;">Totale omzet</div>
<div class="a nw" style="left:622.30px;width:300px;text-align:center;top:471.66px;font-size:13.6px;line-height:18px;color:#2b303a;font-weight:400;-webkit-text-stroke:0.1px #2b303a;">€10.92K</div>
<div class="a" style="left:948.00px;top:197.00px;width:246.00px;height:311.00px;background:#fff;border:1px solid #e6e8ec;border-radius:5px;box-shadow:0 1px 2px rgba(16,24,40,.05);"></div>
<div class="a" style="left:949.00px;top:252.00px;width:244.00px;height:1.00px;background:#eceef1"></div>
<div class="a" style="left:965.4px;top:219px;width:42.4px;height:16px;overflow:hidden"><div class="a nw" style="left:0.00px;top:-1.97px;font-size:12.9px;line-height:17px;color:#1f2430;font-weight:400;-webkit-text-stroke:0.25px #1f2430;">Conversiewaarde</div>
</div>
<div class="a" style="left:1014.80px;top:210.80px;width:126.70px;height:29.20px;background:#fff;border:1px solid #dcdfe4;border-radius:6px;box-shadow:0 1px 1.5px rgba(0,0,0,.07);"></div>
<div class="a nw" style="left:1024.10px;top:218.82px;font-size:11.5px;line-height:15px;color:#3a3f4a;font-weight:400;-webkit-text-stroke:0.1px #3a3f4a;">Alle pijpleidingen</div>
<svg class="a" style="left:1124.0px;top:222.9px" width="9" height="6" viewBox="0 0 9 6"><path d="M1 1.2 L4.5 4.6 L8 1.2" fill="none" stroke="#b9bdc4" stroke-width="1"/></svg>
<svg class="a" style="left:1160.5px;top:220.5px" width="12" height="10" viewBox="0 0 12 10" fill="none" stroke="#4a4f58" stroke-width="1.1"><path d="M0.8 2.5 H7.2 M4.8 7 H11.2"/><circle cx="9" cy="2.5" r="1.7" fill="#fff"/><circle cx="3" cy="7" r="1.7" fill="#fff"/></svg>
<div class="a nw" style="left:969.40px;top:266.30px;font-size:28px;line-height:36px;color:#2d3547;font-weight:400;-webkit-text-stroke:0.75px #2d3547;letter-spacing:0.8px">€3.93K</div>
<div class="a" style="left:968.00px;top:306.80px;width:51.50px;height:13.90px;background:#e7f4e9;border-radius:6.949999999999989px"></div>
<svg class="a" style="left:974.5px;top:310.3px" width="7" height="7" viewBox="0 0 7 7" fill="none" stroke="#5aab6e" stroke-width="1"><path d="M3.5 6.6 V1 M1.2 3.2 L3.5 0.9 L5.8 3.2"/></svg>
<div class="a nw" style="left:985.20px;top:306.43px;font-size:10.6px;line-height:14px;color:#54ab68;font-weight:400;">100%</div>
<div class="a nw" style="left:1023.40px;top:305.69px;font-size:11px;line-height:14px;color:#3a3f4a;font-weight:400;-webkit-text-stroke:0.15px #3a3f4a;">vs afgelopen 31 dagen</div>
<svg class="a" style="left:1011px;top:336.4px" width="120" height="120" viewBox="-60 -60 120 120">
<circle cx="0" cy="0" r="46.2" fill="none" stroke="#e5e8f1" stroke-width="9.8"/>
<path d="M 0 -46.2 A 46.2 46.2 0 0 1 46.2 0" fill="none" stroke="#64a6ef" stroke-width="9.8" stroke-linecap="round"/>
</svg>
<div class="a nw" style="left:920.50px;width:300px;text-align:center;top:385.66px;font-size:18px;line-height:23px;color:#3a404c;font-weight:400;">25%</div>
<div class="a nw" style="left:921.00px;width:300px;text-align:center;top:457.61px;font-size:9.6px;line-height:12px;color:#6d727b;font-weight:400;">Gewonnen omzet</div>
<div class="a nw" style="left:921.20px;width:300px;text-align:center;top:471.96px;font-size:13.6px;line-height:18px;color:#2b303a;font-weight:400;-webkit-text-stroke:0.1px #2b303a;">€3.93K</div>
<div class="a" style="left:180.00px;top:519.00px;width:502.00px;height:241.00px;background:#fff;border:1px solid #e6e8ec;border-radius:5px;box-shadow:0 1px 2px rgba(16,24,40,.05);"></div>
<div class="a" style="left:181.00px;top:568.00px;width:500.00px;height:1.00px;background:#eceef1"></div>
<div class="a nw" style="left:197.30px;top:535.33px;font-size:12.9px;line-height:17px;color:#1f2430;font-weight:400;-webkit-text-stroke:0.25px #1f2430;">Trechter</div>
<div class="a" style="left:475.20px;top:529.50px;width:154.20px;height:29.00px;background:#fff;border:1px solid #dcdfe4;border-radius:6px;box-shadow:0 1px 1.5px rgba(0,0,0,.07);"></div>
<div class="a nw" style="left:484.50px;top:537.42px;font-size:11.5px;line-height:15px;color:#3a3f4a;font-weight:400;-webkit-text-stroke:0.1px #3a3f4a;">Advertentie pipeline</div>
<svg class="a" style="left:611.9px;top:541.5px" width="9" height="6" viewBox="0 0 9 6"><path d="M1 1.2 L4.5 4.6 L8 1.2" fill="none" stroke="#b9bdc4" stroke-width="1"/></svg>
<svg class="a" style="left:648.0px;top:539px" width="12" height="10" viewBox="0 0 12 10" fill="none" stroke="#4a4f58" stroke-width="1.1"><path d="M0.8 2.5 H7.2 M4.8 7 H11.2"/><circle cx="9" cy="2.5" r="1.7" fill="#fff"/><circle cx="3" cy="7" r="1.7" fill="#fff"/></svg>
<div class="a nw" style="left:200.60px;top:581.60px;font-size:28px;line-height:36px;color:#2d3547;font-weight:400;-webkit-text-stroke:0.75px #2d3547;letter-spacing:0.8px">€3.93K</div>
<div class="a" style="left:200.00px;top:622.70px;width:52.00px;height:16.60px;background:#e7f4e9;border-radius:8.299999999999955px"></div>
<svg class="a" style="left:206.5px;top:627.9000000000001px" width="7" height="7" viewBox="0 0 7 7" fill="none" stroke="#5aab6e" stroke-width="1"><path d="M3.5 6.6 V1 M1.2 3.2 L3.5 0.9 L5.8 3.2"/></svg>
<div class="a nw" style="left:217.20px;top:624.03px;font-size:10.6px;line-height:14px;color:#54ab68;font-weight:400;">100%</div>
<div class="a nw" style="left:256.00px;top:623.89px;font-size:11px;line-height:14px;color:#3a3f4a;font-weight:400;-webkit-text-stroke:0.15px #3a3f4a;">vs afgelopen 31 dagen</div>
<div class="a nw" style="left:72.70px;width:300px;text-align:center;top:658.81px;font-size:9.6px;line-height:12px;color:#6d727b;font-weight:400;">0</div>
<div class="a nw" style="left:142.00px;width:300px;text-align:center;top:658.81px;font-size:9.6px;line-height:12px;color:#6d727b;font-weight:400;">1</div>
<div class="a nw" style="left:211.30px;width:300px;text-align:center;top:658.81px;font-size:9.6px;line-height:12px;color:#6d727b;font-weight:400;">2</div>
<div class="a nw" style="left:280.70px;width:300px;text-align:center;top:658.81px;font-size:9.6px;line-height:12px;color:#6d727b;font-weight:400;">3</div>
<div class="a nw" style="left:350.00px;width:300px;text-align:center;top:658.81px;font-size:9.6px;line-height:12px;color:#6d727b;font-weight:400;">4</div>
<div class="a" style="left:222.70px;top:690.00px;width:277.80px;height:31.50px;background:#68aaf3;border-radius:0 5px 5px 0"></div>
<div class="a nw" style="left:232.50px;top:693.41px;font-size:9.6px;line-height:12px;color:#1d2a3a;font-weight:400;-webkit-text-stroke:0.15px #1d2a3a;">Nieuwe lead</div>
<div class="a nw" style="left:232.50px;top:706.81px;font-size:9.6px;line-height:12px;color:#1d2a3a;font-weight:400;-webkit-text-stroke:0.15px #1d2a3a;">€10.92K</div>
<div class="a" style="left:222.70px;top:723.90px;width:277.80px;height:36.10px;background:#5ec8e5;border-radius:0 5px 5px 0"></div>
<div class="a nw" style="left:232.50px;top:726.61px;font-size:9.6px;line-height:12px;color:#1d2a3a;font-weight:400;-webkit-text-stroke:0.15px #1d2a3a;">Automatische mail ontvangen</div>
<div class="a nw" style="left:395.00px;width:300px;text-align:center;top:665.71px;font-size:9.6px;line-height:12px;color:#2f3440;font-weight:400;-webkit-text-stroke:0.35px #2f3440;">Cumulatief</div>
<svg class="a" style="left:520.6px;top:690px" width="49" height="50" viewBox="0 0 49 50"><path d="M0 1 L24.5 6 L49 1 V33 L24.5 38 L0 33 Z" fill="#e6e8ec"/><path d="M0 38.5 L24.5 43.5 L49 38.5 V50 H0 Z" fill="#e6e8ec"/></svg>
<div class="a nw" style="left:394.60px;width:300px;text-align:center;top:703.61px;font-size:9.6px;line-height:12px;color:#2f3440;font-weight:400;-webkit-text-stroke:0.15px #2f3440;">100.00%</div>
<div class="a nw" style="left:464.50px;width:300px;text-align:center;top:665.81px;font-size:9.6px;line-height:12px;color:#2f3440;font-weight:400;-webkit-text-stroke:0.35px #2f3440;">Volgende</div>
<div class="a nw" style="left:464.50px;width:300px;text-align:center;top:674.46px;font-size:9.6px;line-height:12px;color:#2f3440;font-weight:400;-webkit-text-stroke:0.35px #2f3440;">stap</div>
<div class="a nw" style="left:464.50px;width:300px;text-align:center;top:683.11px;font-size:9.6px;line-height:12px;color:#2f3440;font-weight:400;-webkit-text-stroke:0.35px #2f3440;">conversie</div>
<svg class="a" style="left:590px;top:694px" width="50" height="46" viewBox="0 0 50 46"><path d="M0 0.7 L25 5.6 L50 0.7 V32.5 L25 37.5 L0 32.5 Z" fill="#e6e8ec"/><path d="M0 38 L25 43 L50 38 V46 H0 Z" fill="#e6e8ec"/></svg>
<div class="a nw" style="left:464.00px;width:300px;text-align:center;top:707.11px;font-size:9.6px;line-height:12px;color:#2f3440;font-weight:400;-webkit-text-stroke:0.15px #2f3440;">100.00%</div>
<div class="a" style="left:692.00px;top:519.00px;width:502.00px;height:241.00px;background:#fff;border:1px solid #e6e8ec;border-radius:5px;box-shadow:0 1px 2px rgba(16,24,40,.05);"></div>
<div class="a" style="left:693.00px;top:568.00px;width:500.00px;height:1.00px;background:#eceef1"></div>
<div class="a nw" style="left:709.00px;top:535.45px;font-size:12.9px;line-height:17px;color:#1f2430;font-weight:400;-webkit-text-stroke:0.25px #1f2430;">Faseverdeling</div>
<div class="a" style="left:969.40px;top:529.20px;width:154.10px;height:29.55px;background:#fff;border:1.3px solid #7b97ea;border-radius:6px;box-shadow:0 0 0 2.5px #d5defa;"></div>
<div class="a nw" style="left:978.70px;top:537.39px;font-size:11.5px;line-height:15px;color:#3a3f4a;font-weight:400;-webkit-text-stroke:0.1px #3a3f4a;">Advertentie pipeline</div>
<svg class="a" style="left:1106.0px;top:541.475px" width="9" height="6" viewBox="0 0 9 6"><path d="M1 1.2 L4.5 4.6 L8 1.2" fill="none" stroke="#b9bdc4" stroke-width="1"/></svg>
<svg class="a" style="left:1132.5px;top:538px" width="13" height="13" viewBox="0 0 24 24" fill="none" stroke="#3557d6" stroke-width="2.2" stroke-linejoin="round"><path d="M15.5 2 L17 7 L22 8.5 L17 10 L15.5 15 L14 10 L9 8.5 L14 7 Z"/><path d="M6.5 12 L7.6 15.4 L11 16.5 L7.6 17.6 L6.5 21 L5.4 17.6 L2 16.5 L5.4 15.4 Z"/></svg>
<svg class="a" style="left:1159.9px;top:539px" width="12" height="10" viewBox="0 0 12 10" fill="none" stroke="#4a4f58" stroke-width="1.1"><path d="M0.8 2.5 H7.2 M4.8 7 H11.2"/><circle cx="9" cy="2.5" r="1.7" fill="#fff"/><circle cx="3" cy="7" r="1.7" fill="#fff"/></svg>
<div class="a nw" style="left:712.20px;top:582.00px;font-size:28px;line-height:36px;color:#2d3547;font-weight:400;-webkit-text-stroke:0.75px #2d3547;">4</div>
<div class="a" style="left:712.00px;top:622.60px;width:53.00px;height:17.40px;background:#e7f4e9;border-radius:8.699999999999989px"></div>
<svg class="a" style="left:718.5px;top:627.9000000000001px" width="7" height="7" viewBox="0 0 7 7" fill="none" stroke="#5aab6e" stroke-width="1"><path d="M3.5 6.6 V1 M1.2 3.2 L3.5 0.9 L5.8 3.2"/></svg>
<div class="a nw" style="left:729.20px;top:624.03px;font-size:10.6px;line-height:14px;color:#54ab68;font-weight:400;">100%</div>
<div class="a nw" style="left:768.50px;top:623.89px;font-size:11px;line-height:14px;color:#3a3f4a;font-weight:400;-webkit-text-stroke:0.15px #3a3f4a;">vs afgelopen 31 dagen</div>
<div class="a" style="left:1042.00px;top:682.50px;width:17.00px;height:8.50px;background:#67a8f2;border-radius:2px"></div>
<div class="a nw" style="left:1063.50px;top:674.61px;font-size:9.6px;line-height:12px;color:#454b55;font-weight:400;">Nieuwe lead...</div>
<div class="a nw" style="left:1063.50px;top:687.41px;font-size:9.6px;line-height:12px;color:#454b55;font-weight:400;">€0 (0.00%) - 0</div>
<div class="a" style="left:1042.00px;top:716.70px;width:17.00px;height:8.50px;background:#5ec8e5;border-radius:2px"></div>
<div class="a nw" style="left:1063.50px;top:708.81px;font-size:9.6px;line-height:12px;color:#454b55;font-weight:400;">Automatisch...</div>
<div class="a nw" style="left:1063.50px;top:721.61px;font-size:9.6px;line-height:12px;color:#454b55;font-weight:400;">€0 (0.00%) - 0</div>
<div class="a" style="left:1123.00px;top:551.50px;width:92.00px;height:13.50px;background:#e9e9ea;border:1px solid #d8d8da;border-radius:2px;box-shadow:0 1px 2px rgba(0,0,0,.1)"></div>
<div class="a nw" style="left:1128.00px;top:552.30px;font-size:9.1px;line-height:12px;color:#2b2b2b;font-weight:400;">Advertentie pipeline</div>
<!--/CARDS-->
<div class="a" style="left:150.5px;top:710.5px;width:15px;height:15px;border-radius:50%;background:#5cc68a"></div><svg class="a" style="left:154px;top:714px" width="8" height="8" viewBox="0 0 8 8"><path d="M5.2 1 L2.5 4 L5.2 7" fill="none" stroke="#1d3b2a" stroke-width="1.3"/></svg>
</body></html>
